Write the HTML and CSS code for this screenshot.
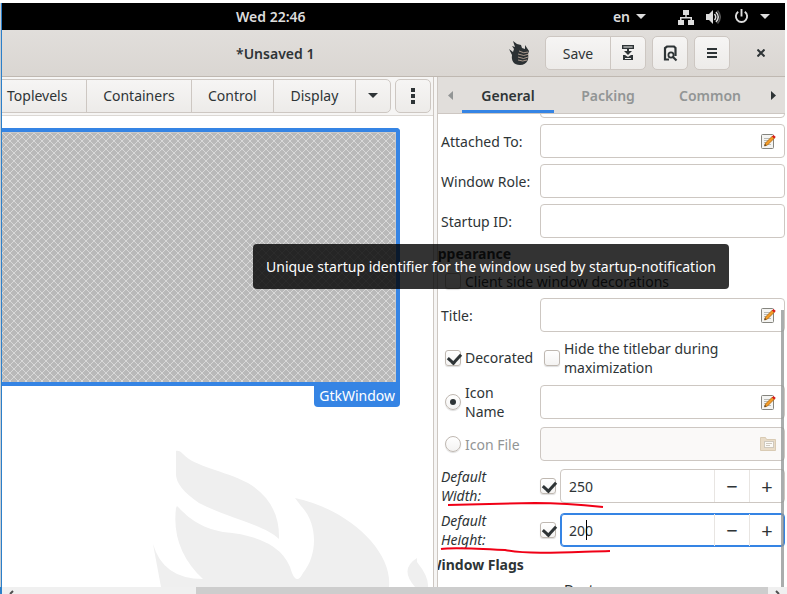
FILE: index.html
```html
<!DOCTYPE html>
<html lang="en">
<head>
<meta charset="utf-8">
<title>Unsaved 1</title>
<link rel="stylesheet" href="styles.css">
</head>
<body>
<svg class="defs" aria-hidden="true">
  <symbol id="edit" viewBox="0 0 16 16">
    <rect x="1.5" y="1.5" width="12" height="14" rx="1" fill="#f4f4f2" stroke="#85857f"/>
    <path d="M4 5.500h6M4 7.500h6M4 9.500h4M4 11.500h7" stroke="#b9bab6"/>
    <path d="M4.500 13l1-3 7-7 2 2-7 7z" fill="#f59b25" stroke="#a8640f" stroke-width=".8"/>
    <path d="M12 3.500l1.500-1.500 2.300 2-1.600 1.600z" fill="#d81b1b"/>
    <path d="M4.500 13l.6-1.700 1.200 1z" fill="#333"/>
  </symbol>
  <symbol id="folder" viewBox="0 0 16 16">
    <path d="M.5 14.500v-13h5l1 2h9v11z" fill="#e9dcc8" stroke="#d9cbb4"/>
    <rect x="4.500" y="5.500" width="9" height="6" fill="#fbfaf7" stroke="#cfc9be"/>
    <path d="M6 7.500h6M6 9.500h4" stroke="#cfc9be"/>
  </symbol>
</svg>
<div class="screen">
  <header class="topbar">
    <span class="clock">Wed 22:46</span>
    <div class="status">
      <span>en</span>
      <svg class="caret" viewBox="0 0 10 5"><path d="M0 0h10L5 5z"/></svg>
      <svg class="net" viewBox="0 0 16 16"><path d="M5 1h6v5H8.700v2H14v3h2v5h-6v-5h2.500V9.500h-9V11H6v5H0v-5h2V8h5.300V6H5z"/></svg>
      <svg class="vol" viewBox="0 0 16 16"><path d="M1 5h3l4-4v14l-4-4H1z"/><path d="M9.500 5q2.500 3 0 6M11 3q4.500 5 0 10" fill="none" stroke="#ddd" stroke-width="1.500"/><path d="M12.500 1.500q5.500 6.500 0 13" fill="none" stroke="#555" stroke-width="1.500"/></svg>
      <svg class="pow" viewBox="0 0 16 16"><path d="M4.500 3a6 6 0 1 0 7 0M8 0v8" fill="none" stroke="#ddd" stroke-width="2"/></svg>
      <svg class="caret" viewBox="0 0 10 5"><path d="M0 0h10L5 5z"/></svg>
    </div>
  </header>
  <div class="titlebar">
    <h1>*Unsaved 1</h1>
    <div class="actions">
      <svg class="logo" viewBox="0 0 24 26">
        <path d="M6 1l4 3 4 1 1 3 3 1V5l4 6-1 3c1 4 0 11-8 11C7 25 4 21 5 15L2 9l4 3 1-3-2-3 3 1z" fill="#2b3033"/>
        <path d="M12 11q5 3 9 1M11 14q6 3 11 0M11 17q6 3 10 0M11 20q5 2 9 0" fill="none" stroke="#c9b3a2" stroke-width=".8"/>
      </svg>
      <div class="linked">
        <button class="save">Save</button>
        <button class="sq" aria-label="Save as"><svg class="i18" viewBox="0 0 18 18"><path d="M3.700 1.700h10.600v2.600H3.700z" fill="none" stroke="#2e3436" stroke-width="1.400"/><path d="M8 4h2v3h3l-4 4-4-4h3zM4 11h2l3 2 3-2h2v5H4z"/><path d="M6 14.500h6" stroke="#eee"/></svg></button>
      </div>
      <button class="sq" aria-label="Preview"><svg class="i18" viewBox="0 0 18 18"><path d="M8 15.500H4V4l2-1.500h7l1.500 1.500v8" fill="none" stroke="#2e3436" stroke-width="2.200"/><circle cx="10" cy="11" r="2.600" fill="none" stroke="#2e3436" stroke-width="1.800"/><path d="M11.500 12.500l4 4" stroke="#2e3436" stroke-width="2.200"/></svg></button>
      <button class="sq" aria-label="Menu"><svg class="i18" viewBox="0 0 18 18"><path d="M4 4h10v2H4zM4 8h10v2H4zM4 12h10v2H4z"/></svg></button>
      <button class="close" aria-label="Close"><svg viewBox="0 0 8 8"><path d="M.5.5l7 7M7.500.5l-7 7" stroke="#2e3436" stroke-width="2"/></svg></button>
    </div>
  </div>
  <div class="panes">
    <main class="editor">
      <div class="palette">
        <div class="linked groups">
          <button class="top">Toplevels</button>
          <button class="cont">Containers</button>
          <button class="ctl">Control</button>
          <button class="disp">Display</button>
          <button class="sq" aria-label="More groups"><svg class="caret" viewBox="0 0 10 5"><path d="M0 0h10L5 5z"/></svg></button>
        </div>
        <button class="sq" aria-label="Options"><svg class="dots" viewBox="0 0 4 16"><path d="M0 0h4v4H0zM0 6h4v4H0zM0 12h4v4H0z"/></svg></button>
      </div>
      <div class="canvas">
        <div class="widget">
          <svg width="100%" height="100%"><defs><pattern id="hatch" width="8" height="8" patternUnits="userSpaceOnUse"><path d="M-1-1l10 10M-1 9L9-1" stroke="#d8d8d8" stroke-width="1"/></pattern></defs><rect width="100%" height="100%" fill="url(#hatch)"/></svg>
        </div>
        <div class="tag">GtkWindow</div>
        <svg class="flame" viewBox="0 0 278 138"><path d="M23 2C24 1 28 2 30 5C42 18 70 21 95 34Q127 53 126 90C112 76 80 71 46 54Q22 38 23 24ZM24 57C35 68 45 78 70 83Q130 88 139 124Q144 136 150 124C165 106 165 74 148 57L142 49C195 60 240 102 236 138H8L0 95Q10 130 50 130Q18 100 23 59ZM264 109Q246 120 262 138H275Q276 128 264 113Z"/></svg>
      </div>
    </main>
    <aside class="inspector">
      <nav class="tabs">
        <button class="arrow off" aria-label="Previous"><svg viewBox="0 0 5 9"><path d="M5 0v9L0 4.500z"/></svg></button>
        <button class="tab on">General</button>
        <button class="tab">Packing</button>
        <button class="tab">Common</button>
        <button class="arrow next" aria-label="Next"><svg viewBox="0 0 5 9"><path d="M0 0v9l5-4.500z"/></svg></button>
      </nav>
      <form class="form">
        <div class="row cut"><span></span><div class="entry"></div></div>
        <div class="row"><label for="att">Attached To:</label><div class="entry"><input id="att"><svg><use href="#edit"/></svg></div></div>
        <div class="row"><label for="role">Window Role:</label><div class="entry"><input id="role"></div></div>
        <div class="row"><label for="sid">Startup ID:</label><div class="entry"><input id="sid"></div></div>
        <h2>Appearance</h2>
        <label class="check csd"><input type="checkbox">Client side window decorations</label>
        <div class="row"><label for="ttl">Title:</label><div class="entry"><input id="ttl"><svg><use href="#edit"/></svg></div></div>
        <div class="row pair"><label class="check"><input type="checkbox" checked>Decorated</label><label class="check"><input type="checkbox">Hide the titlebar during maximization</label></div>
        <div class="row icon-name"><label class="check" for="ic1"><input type="radio" name="ic" id="ic1" checked><span>Icon<br>Name</span></label><div class="entry"><input aria-label="Icon name"><svg><use href="#edit"/></svg></div></div>
        <div class="row"><label class="check dis"><input type="radio" name="ic">Icon File</label><div class="entry disabled"><input disabled aria-label="Icon file"><svg><use href="#folder"/></svg></div></div>
        <div class="row num"><label for="dw">Default Width:</label><input type="checkbox" checked aria-label="Set width"><div class="entry spin"><input id="dw" value="250"><button type="button">−</button><button type="button">+</button></div></div>
        <div class="row num"><label for="dh">Default Height:</label><input type="checkbox" checked aria-label="Set height"><div class="entry spin focus"><input id="dh" value="200"><i class="cursor"></i><button type="button">−</button><button type="button">+</button></div></div>
        <h2>Window Flags</h2>
        <div class="row last"><span></span><span class="destroy">Dest</span></div>
        <svg class="marks" viewBox="0 0 172 54"><path d="M8 4Q45 3 95 2Q125 2 163 6M1 48Q12 46 65 49C90 54 130 51 170 50"/></svg>
      </form>
      <i class="thumb"></i>
    </aside>
  </div>
  <div class="tooltip" role="tooltip">Unique startup identifier for the window used by startup-notification</div>
</div>
<div class="hscroll"><svg viewBox="0 0 7 7"><path d="M6 4L3 7"/></svg><i></i><svg viewBox="0 0 7 7"><path d="M1 4l3 3"/></svg></div>
</body>
</html>
```
FILE: styles.css
```css
* { box-sizing: border-box; }
body { margin: 0; height: 100vh; display: flex; flex-direction: column; overflow: hidden; background: #fff; color: #2e3436; font: 14px/19px "Noto Sans", "Open Sans", sans-serif; }
button, input { font: inherit; color: inherit; margin: 0; }
button { padding: 0; border: 1px solid #cdc7c2; background: linear-gradient(#f6f5f4, #edebe9); display: flex; align-items: center; justify-content: center; border-radius: 5px; }
svg { display: block; fill: #2e3436; flex: none; }
.defs { width: 0; height: 0; position: absolute; }
.screen { flex: 1; min-height: 0; position: relative; display: flex; flex-direction: column; border-left: 1px solid #2c7fc9; margin: 3px 2px 0 1px; box-shadow: -1px 0 #c8cdd2; }
.topbar { height: 27px; flex: none; background: #000; color: #ddd; font-weight: 600; display: flex; align-items: center; justify-content: space-between; padding: 0 15px 0 234px; }
.topbar svg { fill: #ddd; }
.status { display: flex; align-items: center; }
.caret { width: 10px; height: 5px; }
.status .caret:first-of-type { margin: 0 32px 0 6px; }
.net { width: 16px; height: 16px; margin-right: 11px; }
.vol { width: 16px; height: 16px; margin-right: 13px; }
.pow { width: 15px; height: 15px; margin-right: 11px; }
.titlebar { height: 47px; flex: none; display: flex; align-items: center; justify-content: space-between; padding: 0 20px 0 234px; border-bottom: 1px solid #bfb8b1; background: linear-gradient(#e1dedb, #dad6d2); }
h1 { margin: 0; font-size: 14px; font-weight: 600; }
.actions { display: flex; align-items: center; }
.logo { width: 24px; height: 26px; margin-right: 14px; }
.linked { display: flex; }
.linked button { border-radius: 0; margin-left: -1px; }
.linked button:first-child { border-radius: 5px 0 0 5px; margin-left: 0; }
.linked button:last-child { border-radius: 0 5px 5px 0; }
button.save { width: 66px; height: 34px; }
.sq { width: 36px; height: 34px; flex: none; }
.actions > .sq { margin-left: 6px; }
.i18 { width: 18px; height: 18px; }
.close { border: 0; background: none; margin-left: 27px; }
.close svg { width: 8px; height: 8px; }
.panes { flex: 1; min-height: 0; display: grid; grid-template-columns: minmax(0, 1fr) 351px; }
.editor { display: flex; flex-direction: column; min-width: 0; min-height: 0; border-right: 1px solid #cdc7c2; }
.palette { height: 39px; flex: none; display: flex; gap: 4px; align-items: center; padding: 0 2px 1px 0; background: #f6f5f4; border-bottom: 1px solid #dcd8d4; }
.palette button { height: 34px; min-width: 0; }
.groups { flex: 1; }
.linked .top { flex: 86 1 0; border-left: 0; justify-content: flex-start; text-indent: 5px; }
.groups .cont { flex: 106 1 0; }
.groups .ctl { flex: 83 1 0; }
.groups .disp { flex: 83 1 0; }
.linked.groups .top { border-radius: 0; }
.dots { width: 4px; height: 16px; }
.canvas { flex: 1; min-height: 0; position: relative; overflow: hidden; padding: 12px 33px 0 0; background: #fff; }
.widget { height: 258px; border: 4px solid #3584e4; border-left: 0; border-radius: 0 4px 0 0; background: #b9b9b9; }
.widget svg { border: solid #c9c9c9; border-width: 1px 1px 0 0; }
.tag { width: max-content; margin-left: auto; padding: 0 5px 2px; background: #3584e4; color: #fff; border-radius: 0 0 4px 4px; }
.flame { position: absolute; left: 151px; bottom: 0; width: 278px; height: 138px; fill: #efefef; }
.inspector { position: relative; display: flex; flex-direction: column; min-height: 0; min-width: 0; border-left: 1px solid #cdc7c2; box-shadow: -3px 0 #f6f5f4; margin-left: 3px; background: #fff; }
.tabs { height: 37px; flex: none; display: flex; background: #e1dedb; border-bottom: 1px solid #cdc7c2; }
.tabs button { border: 0; background: none; border-radius: 0; }
.tabs .arrow { width: 24px; flex: none; }
.tabs .on { margin-right: 3px; }
.arrow svg { width: 5px; height: 9px; }
.off svg { fill: #929595; }
.tabs .tab { flex: 1 1 0; color: #929595; font-weight: 600; }
.tabs .tab.on { flex: 0 0 92px; color: #2e3436; border-bottom: 3px solid #3584e4; border-top: 3px solid transparent; }
.form { flex: 1; min-height: 0; overflow: hidden; position: relative; padding-left: 3px; }
.row { display: grid; grid-template-columns: 99px minmax(0, 1fr); align-items: center; height: 34px; margin-bottom: 6px; }
.cut { margin-top: -30px; }
.entry { height: 34px; border: 1px solid #cdc7c2; border-radius: 4px; display: flex; align-items: center; padding-right: 8px; background: #fff; }
.entry input { flex: 1; min-width: 0; border: 0; outline: 0; background: none; padding: 0 8px; height: 30px; }
.entry svg { width: 16px; height: 16px; }
h2 { margin: 0 0 0 -13px; font-size: 14px; line-height: 20px; font-weight: 700; }
.check { display: flex; align-items: center; gap: 4px; padding-left: 4px; }
input[type=checkbox], input[type=radio] { appearance: none; flex: none; width: 16px; height: 16px; border: 1px solid #bfb8b1; border-radius: 3px; background: linear-gradient(#fff, #f4f3f2); box-shadow: 0 1px 1px #0002; position: relative; }
input[type=radio] { border-radius: 50%; }
input[type=checkbox]:checked::after { content: ""; position: absolute; left: 4px; top: 0; width: 6px; height: 10px; border: solid #2e3436; border-width: 0 3px 3px 0; transform: rotate(42deg); }
input[type=radio]:checked::after { content: ""; position: absolute; inset: 4px; border-radius: 50%; background: #2e3436; }
.csd { height: 34px; }
.pair { height: 39px; }
.icon-name { height: 38px; }
.dis { color: #929595; }
.entry.disabled { background: #faf9f8; }
.num { grid-template-columns: 99px 20px minmax(0, 1fr); height: 38px; }
.num label { font-style: italic; padding-right: 40px; }
.spin { padding: 0; position: relative; }
.spin button { width: 35px; height: 32px; border: 0; border-left: 1px solid #e8e5e2; background: none; border-radius: 0; font-size: 20px; }
.focus { border-color: #3584e4; box-shadow: inset 0 0 0 1px #3584e4; }
.cursor { position: absolute; left: 25px; top: 6px; width: 1px; height: 20px; background: #000; }
.destroy { padding-left: 24px; }
.last { height: 28px; }
.marks { position: absolute; left: 2px; bottom: 32px; width: 172px; height: 54px; fill: none; stroke: #f00016; stroke-width: 2; }
.thumb { position: absolute; right: 1px; top: 233px; bottom: 0; width: 3px; background: #8b8f8fbb; }
.tooltip { position: absolute; left: 251px; top: 241px; padding: 13px; height: 45px; background: #000c; color: #fff; border-radius: 4px; white-space: nowrap; }
.hscroll { height: 7px; flex: none; display: flex; background: #f0f0f0; border-left: 2px solid #2c7fc9; }
.hscroll i { flex: 1; margin: 0 2px 0 177px; background: #cdcdcd; }
.hscroll svg { width: 7px; height: 7px; margin: 0 5px; fill: none; stroke: #505050; stroke-width: 2; }
```
